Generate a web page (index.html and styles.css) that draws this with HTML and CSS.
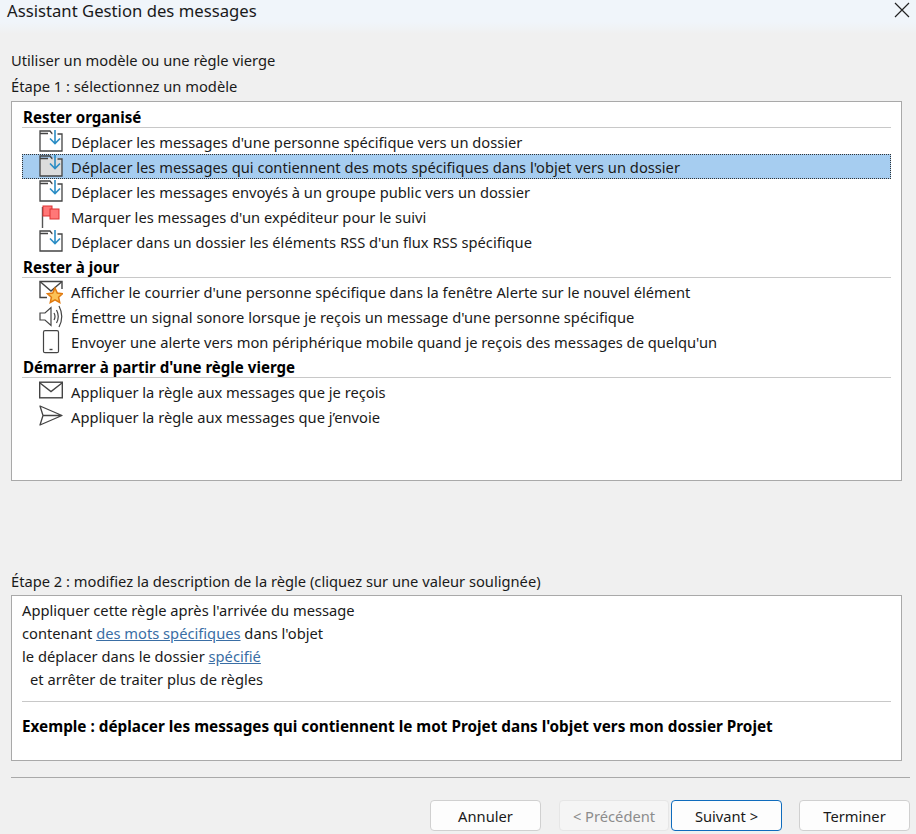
FILE: index.html
```html
<!DOCTYPE html>
<html lang="fr">
<head>
    <meta charset="UTF-8">
    <title>Assistant Gestion des messages</title>
    <link rel="stylesheet" href="styles.css">
</head>
<body>
<svg class="defs" width="0" height="0">
    <symbol id="move" viewBox="0 0 24 24">
        <path d="M1 3.500V21H23V4H18.500M1 3.500V1H11L13 3.500H13.500M1 3.500H9" fill="none" stroke="#444" stroke-width="1.300"/>
        <path d="M16 0V13M11 8.500L16 13.500L21 8.500" fill="none" stroke="#2a8dc5" stroke-width="1.600"/>
    </symbol>
    <symbol id="flag" viewBox="0 0 24 24">
        <path d="M3.500 2V23" stroke="#555" stroke-width="1.400"/>
        <rect x="4" y="1" width="9" height="10" fill="#f77" stroke="#d33"/>
        <rect x="11" y="4" width="9" height="10" fill="#f77" stroke="#d33"/>
    </symbol>
    <symbol id="alert" viewBox="0 0 24 24">
        <path d="M8 17.500H1V1.500H23V9" fill="none" stroke="#444" stroke-width="1.400"/>
        <path d="M1 1.500L12 11L23 1.500" fill="none" stroke="#444" stroke-width="1.400"/>
        <path d="M16 8L18.300 13.100L23.500 13.700L19.600 17.200L20.700 22.500L16 19.800L11.300 22.500L12.400 17.200L8.500 13.700L13.700 13.100Z" fill="#fbc257" stroke="#e07a10" stroke-width="1.500"/>
    </symbol>
    <symbol id="sound" viewBox="0 0 24 24">
        <path d="M1 8H6L12 2.500V20.500L6 15H1Z" fill="none" stroke="#444" stroke-width="1.200"/>
        <path d="M15 8Q17 11.500 15 15M17.500 5Q21 11.500 17.500 18M20 1Q25.500 11.500 20 22" fill="none" stroke="#444" stroke-width="1.200"/>
    </symbol>
    <symbol id="phone" viewBox="0 0 24 24">
        <rect x="4.500" y="0.700" width="15" height="22" rx="1.500" fill="none" stroke="#444" stroke-width="1.200"/>
        <path d="M10.500 19.500H13.500" stroke="#444" stroke-width="1.400"/>
    </symbol>
    <symbol id="mail" viewBox="0 0 24 24">
        <rect x="0.700" y="2.200" width="22.600" height="15.600" fill="none" stroke="#444" stroke-width="1.400"/>
        <path d="M1 3L12 11.500L23 3" fill="none" stroke="#444" stroke-width="1.400"/>
    </symbol>
    <symbol id="send" viewBox="0 0 24 24">
        <path d="M1 1L23 10.500L1 20L4 10.500ZM4 10.500H23" fill="none" stroke="#444" stroke-width="1.300" stroke-linejoin="round"/>
    </symbol>
</svg>

<div class="titlebar">
    <span class="title">Assistant Gestion des messages</span>
    <svg class="close" width="16" height="16" viewBox="0 0 16 16"><path d="M1 1L15 15M15 1L1 15" stroke="#222" stroke-width="1.200"/></svg>
</div>

<div class="content">
    <div class="intro">Utiliser un modèle ou une règle vierge</div>
    <div class="step">Étape 1 : sélectionnez un modèle</div>

    <div class="listbox">
        <div class="group">Rester organisé</div>
        <div class="item"><svg class="icon"><use href="#move"/></svg>Déplacer les messages d'une personne spécifique vers un dossier</div>
        <div class="item on"><svg class="icon"><rect class="shade" x="1" y="3" width="22" height="18"/><use href="#move"/></svg>Déplacer les messages qui contiennent des mots spécifiques dans l'objet vers un dossier</div>
        <div class="item"><svg class="icon"><use href="#move"/></svg>Déplacer les messages envoyés à un groupe public vers un dossier</div>
        <div class="item"><svg class="icon"><use href="#flag"/></svg>Marquer les messages d'un expéditeur pour le suivi</div>
        <div class="item"><svg class="icon"><use href="#move"/></svg>Déplacer dans un dossier les éléments RSS d'un flux RSS spécifique</div>
        <div class="group">Rester à jour</div>
        <div class="item"><svg class="icon"><use href="#alert"/></svg>Afficher le courrier d'une personne spécifique dans la fenêtre Alerte sur le nouvel élément</div>
        <div class="item"><svg class="icon"><use href="#sound"/></svg>Émettre un signal sonore lorsque je reçois un message d'une personne spécifique</div>
        <div class="item"><svg class="icon"><use href="#phone"/></svg>Envoyer une alerte vers mon périphérique mobile quand je reçois des messages de quelqu'un</div>
        <div class="group">Démarrer à partir d'une règle vierge</div>
        <div class="item"><svg class="icon"><use href="#mail"/></svg>Appliquer la règle aux messages que je reçois</div>
        <div class="item"><svg class="icon"><use href="#send"/></svg>Appliquer la règle aux messages que j’envoie</div>
    </div>

    <div class="step step2">Étape 2 : modifiez la description de la règle (cliquez sur une valeur soulignée)</div>

    <div class="descbox">
        <div class="line">Appliquer cette règle après l'arrivée du message</div>
        <div class="line">contenant <a class="link">des mots spécifiques</a> dans l'objet</div>
        <div class="line">le déplacer dans le dossier <a class="link">spécifié</a></div>
        <div class="line indent">et arrêter de traiter plus de règles</div>
        <div class="example">Exemple : déplacer les messages qui contiennent le mot Projet dans l'objet vers mon dossier Projet</div>
    </div>

    <div class="footer">
        <button class="btn btn-cancel">Annuler</button>
        <button class="btn btn-off">&lt; Précédent</button>
        <button class="btn btn-main">Suivant &gt;</button>
        <button class="btn btn-end">Terminer</button>
    </div>
</div>
</body>
</html>
```
FILE: styles.css
```css
*{
    margin: 0;
    padding: 0;
    box-sizing: border-box;
}
html,body{
    height: 100%;
    overflow: hidden;
}
body{
    background: #f0f0f0;
    font-family: "Noto Sans", "Open Sans", sans-serif;
    font-size: 14.7px;
    color: #1a1a1a;
}
.defs{
    display: block;
    height: 0;
}
.titlebar{
    height: 34px;
    padding: 0 6px 14px 7px;
    display: flex;
    align-items: center;
    justify-content: space-between;
    background: linear-gradient(#f0f5fa 0, #f0f5fa 22px, #f0f0f0 34px);
}
.title{
    font-size: 16.7px;
}
.content{
    padding: 14px 6px 0 11px;
}
.intro,.step{
    height: 25px;
    line-height: 25px;
}
.intro{
    margin-bottom: 1px;
}
.step{
    margin-bottom: 2px;
}
.listbox{
    height: 380px;
    margin-right: 8px;
    padding: 2px 10px 0 10px;
    background: #fff;
    border: 1px solid #a9a9a9;
}
.group{
    height: 24px;
    line-height: 26px;
    margin-bottom: 1px;
    padding-left: 1px;
    font-size: 15.1px;
    font-weight: 700;
    color: #000;
    border-bottom: 1px solid #c8c8c8;
}
.item{
    height: 25px;
    display: flex;
    align-items: center;
    padding-left: 17px;
    white-space: nowrap;
}
.item.on{
    background: #a6cdf0;
    outline: 1px dotted #333;
    outline-offset: -1px;
}
.icon{
    width: 24px;
    height: 24px;
    margin-right: 8px;
    flex: none;
}
.shade{
    fill: #dcdcdc;
}
.step2{
    margin-top: 88px;
    margin-bottom: 1px;
}
.descbox{
    height: 166px;
    margin-right: 8px;
    padding: 3px 10px 0 10px;
    background: #fff;
    border: 1px solid #a9a9a9;
}
.line{
    height: 23px;
    line-height: 23px;
}
.indent{
    padding-left: 8px;
}
.link{
    color: #3a6ea5;
    text-decoration: underline;
}
.example{
    margin-top: 10px;
    padding-top: 14px;
    border-top: 1px solid #c8c8c8;
    font-size: 15.3px;
    font-weight: 700;
    color: #000;
    white-space: nowrap;
}
.footer{
    margin-top: 16px;
    height: 57px;
    padding-top: 22px;
    border-top: 1px solid #a9a9a9;
    display: flex;
    justify-content: flex-end;
}
.btn{
    width: 111px;
    height: 31px;
    font-family: inherit;
    font-size: 14.7px;
    color: #1a1a1a;
    background: #fdfdfd;
    border: 1px solid #d0d0d0;
    border-radius: 4px;
}
.btn-cancel{
    margin-right: 18px;
}
.btn-off{
    width: 110px;
    margin-right: 2px;
    color: #8c8c8c;
    background: #f5f5f5;
    border-color: #e6e6e6;
}
.btn-main{
    margin-right: 17px;
    border-color: #0f6cbd;
}
```
